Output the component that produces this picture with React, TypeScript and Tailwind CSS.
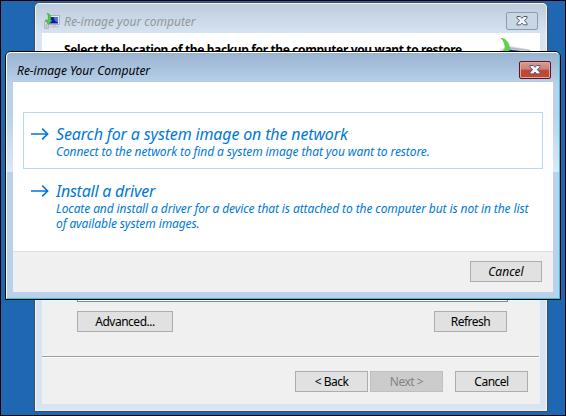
import type { ReactNode } from "react";

const italic = "font-['Noto_Sans',sans-serif] italic whitespace-nowrap";
const upright = "font-['Noto_Sans',sans-serif] tracking-[-0.5px] whitespace-nowrap";

function Button({ className, children }: { className: string; children: ReactNode }) {
  return (
    <button className={`flex h-[21px] shrink-0 items-center justify-center border pt-px text-[12px] leading-none ${className}`}>
      {children}
    </button>
  );
}

function CloseGlyph() {
  return (
    <svg width="12" height="10" viewBox="0 0 12 10" className="block">
      <path d="M1 .5H4.3L6 2.3 7.7.5H11V2.2L8.3 4.7 11 7.2V8.9H7.7L6 7.1 4.3 8.9H1V7.2L3.7 4.7 1 2.2Z" fill="#f6f7fa" stroke="#545b70" strokeWidth="1" />
    </svg>
  );
}

function ComputerIcon() {
  return (
    <svg width="17" height="17" viewBox="0 0 17 17" className="block">
      <path d="M4.5 2.5H15.5V11.5H4.5Z" fill="#e9ecee" stroke="#aab0b5" strokeWidth="1" />
      <path d="M5 4H14V10.5H5Z" fill="#1018a8" />
      <path d="M9.5 4H14V9.5L11 8Z" fill="#4778ee" />
      <path d="M9 12H12V13H9ZM6 13H15V14.5H6Z" fill="#c3c7ca" />
      <path d="M.5 8.5H4.5V15.5H.5Z" fill="#d7dadd" stroke="#a2a8ad" strokeWidth=".7" />
      <path d="M1.5 12H3.5M1.5 14H3.5" stroke="#888e94" strokeWidth=".7" />
      <path d="M3 0C6.5 1 7.5 4 6.6 7L8 7.5 4.2 11.5 1.2 7 3.6 7.2C4.8 5 4.5 2.4 3 0Z" fill="#54c848" stroke="#339a36" strokeWidth=".5" />
    </svg>
  );
}

function HeaderArt() {
  return (
    <svg width="32" height="14" viewBox="0 0 32 14" className="block">
      <path d="M0 11 10 8 30 11.5V14H0Z" fill="#dfe1e2" />
      <path d="M9 9 30 12V13L10 11Z" fill="#b4b7ba" />
      <path d="M9 11.5 21 13V14H8Z" fill="#1426c8" />
      <path d="M1 0C7 1.5 10.500 6 9 14H2L5 10.500C5.500 7 4 3 1 0Z" fill="#58d93e" stroke="#48b43e" strokeWidth=".6" />
    </svg>
  );
}

function Option({ title, text, className, titleSpacing, textSpacing }: { title: string; text: string; className: string; titleSpacing: string; textSpacing: string }) {
  return (
    <div className={`flex border text-[#0078d7] ${className}`}>
      <svg width="18" height="12" viewBox="0 0 18 12" className="mt-[15px] ml-[7px] shrink-0">
        <path d="M0 6H16.6M11.2.7 16.6 6 11.2 11.3" fill="none" stroke="currentColor" strokeWidth="1.65" />
      </svg>
      <div className={`ml-[7px] pt-[11px] ${italic}`}>
        <div className={`text-[16px] leading-[20px] ${titleSpacing}`}>{title}</div>
        <p className={`text-[12px] leading-[15px] whitespace-pre-line ${textSpacing}`}>{text}</p>
      </div>
    </div>
  );
}

export default function App() {
  return (
    <div className="relative h-[416px] w-[566px] overflow-hidden border border-black bg-[#2067b2]">
      <section className="absolute top-[1px] left-[33px] flex h-[410px] w-[514px] flex-col rounded-t-[6px] border border-[#454a50] bg-[#d7e4f2] p-[1px] px-[7px]">
        <div className="pointer-events-none absolute inset-0 rounded-t-[5px] border border-white/70 bg-linear-to-b from-[#bdccdc] to-[#d7e4f2] to-[30px]" />
        <header className="relative flex h-[29px] shrink-0 items-start pt-[8px]">
          <div className="mt-px ml-[2px]"><ComputerIcon /></div>
          <span className={`mt-[2px] ml-[3px] grow text-[12px] leading-[15px] text-[#92979c] ${italic}`}>Re-image your computer</span>
          <button className="mr-[2px] flex h-[18px] w-[32px] items-center justify-center rounded-[2px] border border-[#8b9bb0] bg-[#c9d6e4]"><CloseGlyph /></button>
        </header>
        <div className="relative flex h-[371px] w-[498px] flex-col bg-[#f0f0f0]">
          <div className="flex h-[60px] shrink-0 justify-between bg-white pt-[5px] pr-[8px] pl-[22px]">
            <b className={`mt-[4px] text-[12px] leading-[15px] font-bold ${italic} not-italic tracking-[-0.36px]`}>Select the location of the backup for the computer you want to restore.</b>
            <HeaderArt />
          </div>
          <div className="ml-[35px] h-[209px] w-[431px] shrink-0 border border-[#828790] bg-white" />
          <div className={`flex justify-between pt-[9px] pr-[33px] pl-[35px] ${upright}`}>
            <Button className="w-[96px] border-[#adadad] bg-[#e1e1e1]">Advanced...</Button>
            <Button className="w-[73px] border-[#adadad] bg-[#e1e1e1]">Refresh</Button>
          </div>
          <div className="mt-[24px] mr-[1px] h-[2px] shrink-0 border-t border-[#a0a0a0] bg-white" />
          <div className={`flex pt-[13px] pl-[253px] ${upright}`}>
            <Button className="w-[73px] border-[#adadad] bg-[#e1e1e1]">&lt; Back</Button>
            <Button className="ml-[2px] w-[73px] border-[#bfbfbf] bg-[#cccccc] text-[#838383]">Next &gt;</Button>
            <Button className="ml-[12px] w-[73px] border-[#adadad] bg-[#e1e1e1]">Cancel</Button>
          </div>
        </div>
      </section>

      <section className="absolute top-[50px] left-[4px] flex h-[249px] w-[556px] flex-col rounded-t-[6px] border border-black bg-[#b9d1ea] px-[7px]">
        <div className="pointer-events-none absolute inset-0 rounded-t-[5px] border border-t-white border-r-[#38bfd5] border-b-[#38bfd5] border-l-white bg-linear-to-b from-[#99b4d1] to-[#b9d1ea] to-[31px]" />
        <div className="pointer-events-none absolute top-[62px] left-[1px] h-[58px] w-[552px] bg-linear-to-b from-[#b9d1ea] to-[#dce8f6]" />
        <header className="relative flex h-[30px] shrink-0 items-start pt-[9px]">
          <span className={`mt-[2px] ml-[4px] grow text-[12px] leading-[15px] text-black ${italic}`}>Re-image Your Computer</span>
          <button className="mr-[2px] flex h-[18px] w-[32px] items-center justify-center rounded-[2px] border border-[#591625] bg-linear-to-b from-[#d99a92] from-0% via-[#c98176] via-45% to-[#bd4936] to-50% shadow-[inset_0_0_0_1px_#e8a69b]"><CloseGlyph /></button>
        </header>
        <div className="relative flex h-[210px] w-[540px] flex-col bg-white">
          <div className="h-[169px] shrink-0 px-[10px] pt-[30px]">
            <Option className="h-[57px] border-[#b9d9f2]" title="Search for a system image on the network" titleSpacing="tracking-[-0.15px]" text="Connect to the network to find a system image that you want to restore." textSpacing="tracking-[-0.1px]" />
            <Option className="h-[72px] border-transparent" title="Install a driver" titleSpacing="tracking-[-0.25px]" text={"Locate and install a driver for a device that is attached to the computer but is not in the list\nof available system images."} textSpacing="tracking-[-0.1px]" />
          </div>
          <footer className={`flex h-[41px] justify-end border-t border-[#dfdfdf] bg-[#f0f0f0] pt-[9px] pr-[11px] ${italic}`}>
            <Button className="w-[72px] border-[#adadad] bg-[#e1e1e1]">Cancel</Button>
          </footer>
        </div>
      </section>
    </div>
  );
}
